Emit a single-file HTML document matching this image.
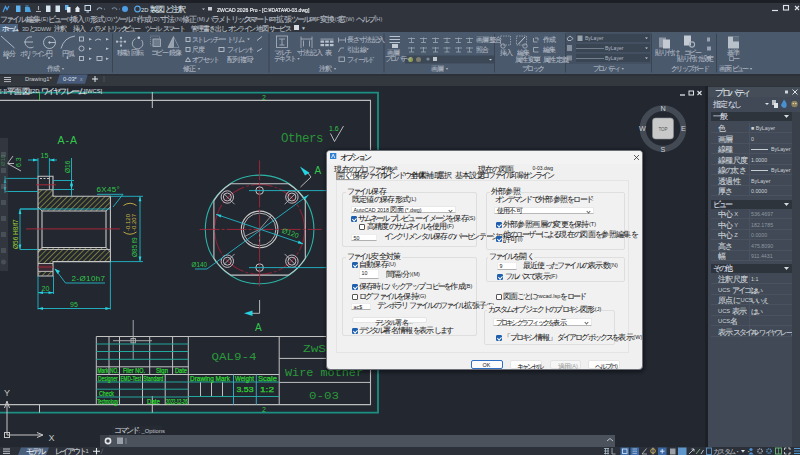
<!DOCTYPE html>
<html><head><meta charset="utf-8">
<style>
*{margin:0;padding:0;box-sizing:border-box}
html,body{width:800px;height:455px;overflow:hidden;background:#222730;font-family:"Liberation Sans",sans-serif;color:#d0d4da}
.a{position:absolute;white-space:nowrap}
.j,.k{font-size:1.35em;-webkit-text-stroke:0.1px currentColor;letter-spacing:-0.08em;position:relative;top:.12em}
.k{letter-spacing:-0.243em}
#top{left:0;top:0;width:800px;height:3px;background:#1c1f25}
#title{left:0;top:3px;width:800px;height:28.5px;background:#30353d}
#ribbon{left:0;top:31.5px;width:800px;height:42.7px;background:#4a596c}
#gap{left:0;top:74.2px;width:800px;height:2px;background:#2c3038}
#doctabs{left:0;top:76.2px;width:800px;height:9.8px;background:#33383f}
#vp{left:0;top:86px;width:705px;height:361px;background:#222730;overflow:hidden}
#vsep{left:705px;top:86px;width:3px;height:361px;background:#1d2026}
#props{left:708px;top:86px;width:92px;height:361px;background:#404955;overflow:hidden}
#status{left:0;top:447px;width:800px;height:8px;background:#2c3139}
.m{font-size:5.6px;line-height:8px;color:#b4bac2;top:15px}
.rt{font-size:5.4px;line-height:7px;color:#bcc2ca;top:24.5px}
.ic{position:absolute}
.rl{font-size:5.2px;line-height:6px;color:#aeb6c1}
.sep{position:absolute;top:33px;width:1px;height:39px;background:#3a4554}
</style><style>
.dt{font-size:5.6px;line-height:7px;color:#1e1e1e;margin-top:-1px}
.gl{font-size:5.6px;line-height:7px;color:#1e1e1e;background:#f1f1f1;padding:0 1px;margin-top:-1px}
.gb{border:1px solid #dedede;border-radius:2px}
.dd{height:7.5px;background:#fff;border:1px solid #e8e8e8;border-bottom-color:#b8b8b8;border-radius:1px}
.dd>span{position:absolute;left:2px;top:0;font-size:5.3px;line-height:6px;color:#222}
.dd:after{content:"";position:absolute;right:3px;top:2px;width:2px;height:2px;border-right:0.7px solid #666;border-bottom:0.7px solid #666;transform:rotate(45deg)}
.inp{height:7.5px;background:#fff;border:1px solid #ececec;border-bottom-color:#b0b0b0}
.inp>span{position:absolute;left:2px;top:0;font-size:5.3px;line-height:6px;color:#222}
.cb{width:6px;height:6px;border:0.8px solid #555;border-radius:1px;background:#fff}
.cb.on{background:#1f5fae;border-color:#1f5fae}
.cb.on:after{content:"";position:absolute;left:1.5px;top:0.3px;width:1.5px;height:3px;border-right:1px solid #fff;border-bottom:1px solid #fff;transform:rotate(45deg);box-sizing:content-box}
.btn{background:#fdfdfd;border:1px solid #e4e4e4;border-radius:2px}
.btn>span{position:absolute;top:0.5px;font-size:5.5px;line-height:7px;color:#1e1e1e}
#dlg .j,#dlg .k{-webkit-text-stroke:0.05px currentColor}
</style>
</head><body>
<div id="top" class="a"></div>
<div id="title" class="a"></div>
<div id="ribbon" class="a"></div>
<div id="gap" class="a"></div>
<div id="doctabs" class="a"></div>
<!-- quick access icons -->
<svg class="a" style="left:0;top:3px" width="320" height="11" viewBox="0 3 320 11">
<path d="M3,12L5.5,6.5L7,9.5L9,6" stroke="#4a9be0" stroke-width="1.3" fill="none"/>
<rect x="16" y="5.5" width="4.5" height="6.5" fill="#5fb3ee"/>
<path d="M25,7H29.5L31,12H25Z" fill="#4aa3df"/><path d="M25.5,6h3" stroke="#4aa3df"/>
<path d="M36,11.5H41M38.5,6V10" stroke="#a8adb5" stroke-width="1.1"/>
<rect x="46" y="5.5" width="4.5" height="6.5" fill="#d8e6f2"/>
<rect x="55.5" y="5.5" width="4.5" height="6.5" fill="#d8e6f2"/>
<rect x="65" y="5" width="3.5" height="5" fill="#5fb3ee"/><rect x="67" y="7" width="3.5" height="5.5" fill="#e0ecf5"/>
<path d="M75,9L77.5,6L80,9M75.5,9H79.5V12H75.5Z" fill="#e2e8ee"/>
<rect x="85" y="5.5" width="5.5" height="5" fill="none" stroke="#c7dcee" stroke-width="1"/><path d="M86.5,12H89" stroke="#c7dcee"/>
<path d="M97,10Q99,6 102,9" stroke="#8fa0b5" stroke-width="1.1" fill="none"/><circle cx="104.5" cy="9" r="0.6" fill="#8fa0b5"/>
<path d="M117,10Q115,6 112,9" stroke="#76839a" stroke-width="1.1" fill="none"/><circle cx="119.5" cy="9" r="0.6" fill="#76839a"/>
<circle cx="125" cy="9" r="3" fill="#4d9ee6"/>
<circle cx="137.5" cy="9" r="2.8" fill="none" stroke="#5aa7e8" stroke-width="1.2"/>
<path d="M202,8.5H205L203.5,10Z" fill="#c8ccd2"/>
<rect x="208" y="7" width="4" height="3.5" fill="#c8ccd2"/>
</svg>
<div class="a" style="left:141px;top:4.5px;font-size:5.8px;line-height:9px;color:#dfe3e8">2D <span class="j">製図</span><span class="k">と</span><span class="j">注釈</span></div>
<div class="a" style="left:217px;top:4.5px;font-size:6.2px;line-height:9px;color:#e8ebee;transform:scaleX(.82);-webkit-text-stroke:0.2px #e8ebee;transform-origin:0 0">ZWCAD 2026 Pro - [C:¥DATA¥0-03.dwg]</div>
<svg class="a" style="left:765px;top:3px" width="35" height="11"><path d="M7,7.5H13" stroke="#dfe3e8" stroke-width="1.2"/><rect x="18.5" y="2.5" width="5" height="4.5" fill="none" stroke="#dfe3e8" stroke-width="1.1"/><path d="M30,3L34,7M34,3L30,7" stroke="#dfe3e8" stroke-width="1.1"/></svg>
<!-- menu -->
<div class="a m" style="left:0"><span class="k">ファイル</span>(F)</div><div class="a m" style="left:26px"><span class="j">編集</span>(E)</div><div class="a m" style="left:48px"><span class="k">ビュー</span>(V)</div><div class="a m" style="left:70px"><span class="j">挿入</span>(I)</div><div class="a m" style="left:90px"><span class="j">形式</span>(O)</div><div class="a m" style="left:113px"><span class="k">ツール</span>(T)</div><div class="a m" style="left:137px"><span class="j">作成</span>(D)</div><div class="a m" style="left:160px"><span class="j">寸法</span>(N)</div><div class="a m" style="left:182px"><span class="j">修正</span>(M)</div><div class="a m" style="left:206px"><span class="k">パラメトリック</span>(P)</div><div class="a m" style="left:244px"><span class="k">スマート</span>(S)</div><div class="a m" style="left:269px">ET<span class="j">拡張</span><span class="k">ツール</span>(X)</div><div class="a m" style="left:309px">SXF<span class="j">変換</span>(S)</div><div class="a m" style="left:338px"><span class="j">窓</span>(W)</div><div class="a m" style="left:356px"><span class="k">ヘルプ</span>(H)</div>
<!-- ribbon tabs -->
<div class="a" style="left:0;top:23.5px;width:17.5px;height:8px;background:#4d6481"></div>
<div class="a rt" style="left:2px;color:#e8eef5"><span class="k">ホーム</span></div><div class="a rt" style="left:22px">3D<span class="k">と</span>3DWW</div><div class="a rt" style="left:54px"><span class="j">注釈</span></div><div class="a rt" style="left:73px"><span class="j">挿入</span></div><div class="a rt" style="left:90px"><span class="k">パラメトリック</span></div><div class="a rt" style="left:124px"><span class="k">ビュー</span></div><div class="a rt" style="left:145px"><span class="k">ツール</span></div><div class="a rt" style="left:163px"><span class="k">スマート</span></div><div class="a rt" style="left:191px"><span class="j">管理</span></div><div class="a rt" style="left:203px"><span class="j">書</span><span class="k">き</span><span class="j">出</span><span class="k">し</span></div><div class="a rt" style="left:228px"><span class="k">オンライン</span></div><div class="a rt" style="left:256px"><span class="j">地図</span><span class="k">サービス</span></div>
<div class="a" style="left:294px;top:25px;width:5px;height:5px;background:#d8dce2"></div><div class="a rt" style="left:301px;font-size:5px">▼</div>
<svg class="a" style="left:0;top:31.5px" width="800" height="42" viewBox="0 31.5 800 42">
<g fill="none" stroke="#b9c1cc" stroke-width="0.9">
<path d="M1,35.5L14.5,47.5"/>
<path d="M32,36.5A5.5,5.5 0 1 0 33.5,46.5"/><path d="M24,41.5H33"/>
<circle cx="49.5" cy="42" r="6"/><path d="M49.5,42H55.5"/><circle cx="49.5" cy="42" r="0.8" fill="#b9c1cc"/>
<path d="M61,48Q64,37 75,35.5"/>
<rect x="79.5" y="36.5" width="4" height="4"/><path d="M95,40Q98,37 101,39.5"/>
<circle cx="81.5" cy="48" r="2.5"/>
<rect x="79.5" y="56" width="4" height="4"/><rect x="97" y="56" width="5" height="4"/>
<path d="M121,37V45.5M116.5,41.2H125.5" stroke="#8f9aa8" stroke-width="0.7"/><g fill="#b9c1cc" stroke="none"><circle cx="121" cy="37.3" r="1.1"/><circle cx="121" cy="45.2" r="1.1"/><circle cx="117" cy="41.2" r="1.1"/><circle cx="125" cy="41.2" r="1.1"/><circle cx="121" cy="41.2" r="0.8"/></g>
<path d="M135.5,38.2A5.3,5.3 0 1 0 141.5,39.5" stroke="#aeb6c1"/><circle cx="138.8" cy="37.3" r="1.3" fill="#d0d6de" stroke="none"/>
<rect x="150.5" y="35.5" width="9" height="9" stroke="#8f9aa8" stroke-width="0.7" stroke-dasharray="1.2 0.8"/><rect x="153" y="38.5" width="7.5" height="7.5" fill="#6e7b8b" stroke="#aeb6c1" stroke-width="0.8"/>
<path d="M173.5,36L168,47H173.5Z" fill="#98a3b0" stroke="#aeb6c1" stroke-width="0.7"/><path d="M173.5,36L179,47H173.5" stroke="#8f9aa8" stroke-width="0.7"/>
<rect x="186" y="37" width="4" height="4"/><rect x="186" y="47" width="4" height="4"/><path d="M185.5,61L188,57L190.5,61Z"/>
<path d="M219,38.5H226"/><rect x="219" y="47" width="5" height="4"/>
<path d="M257,40L262,36M257,51L262,48"/>
<rect x="276.5" y="35.5" width="11" height="11.5" stroke="#aeb6c1" stroke-width="0.8"/><path d="M279,38.5H285M282,38.5V44.5M279.5,44.5H284.5" stroke="#aeb6c1" stroke-width="0.8"/>
<path d="M301,36V47.5M312,36V47.5M301,38.5H312M303.5,40V46M309.5,40V46" stroke="#aeb6c1" stroke-width="0.8"/>
<path d="M338.5,37V42M345.5,37V42M338.5,39.5H345.5M338.5,51.5L340.5,47.5H344" stroke="#aeb6c1" stroke-width="0.8"/>
<rect x="339" y="56.5" width="5.5" height="4.5" stroke="#aeb6c1" stroke-width="0.8"/>
<path d="M389.5,36H400M389.5,39H400M389.5,42H400" stroke="#b9c1cc" stroke-width="1"/><rect x="392" y="43.5" width="6" height="4" fill="#c3cad2" stroke="none"/>
<rect x="500.5" y="35.5" width="10" height="9" stroke="#9ea8b5" stroke-width="0.8" stroke-dasharray="1.5 1"/><circle cx="503" cy="45.5" r="2.2" stroke="#aeb6c1" stroke-width="0.8"/>
<path d="M518,44L525,36.5" stroke="#c0c7d0" stroke-width="1"/><rect x="516.5" y="35.5" width="10" height="9" stroke="#9ea8b5" stroke-width="0.8" stroke-dasharray="1.5 1"/><circle cx="525" cy="45.5" r="2.2" stroke="#aeb6c1" stroke-width="0.8"/>
<path d="M533.5,37.5V41.5H537.5M535,37.5H538V40" stroke="#aeb6c1" stroke-width="0.8"/><path d="M533.5,47V51.5H538.5M533.5,47H538.5" stroke="#aeb6c1" stroke-width="0.8"/><path d="M534,57H540M534,59.5H540" stroke="#aeb6c1" stroke-width="0.8"/>


</g>
<g fill="#b9c2cd">
<rect x="320.5" y="38" width="13" height="1.2" fill="#8d98a6"/><rect x="320.5" y="40" width="3.6" height="2.2"/><rect x="325.2" y="40" width="3.6" height="2.2"/><rect x="329.9" y="40" width="3.6" height="2.2"/><rect x="320.5" y="43.5" width="3.6" height="2.2"/><rect x="325.2" y="43.5" width="3.6" height="2.2"/><rect x="329.9" y="43.5" width="3.6" height="2.2"/>
<g fill="none" stroke="#9ea8b5" stroke-width="0.8"><path d="M408,38H415M411.5,37V42M409,42H414"/><path d="M420,38H427M423.5,37V42M421,42H426"/><path d="M432,38H439M435.5,37V42M433,42H438"/><path d="M443.5,38H450.5M447.0,37V42M444.5,42H449.5"/><path d="M455,38H462M458.5,37V42M456,42H461"/><path d="M466,38H473M469.5,37V42M467,42H472"/><path d="M408,47.5H415M411.5,46.5V51.5M409,51.5H414"/><path d="M420,47.5H427M423.5,46.5V51.5M421,51.5H426"/><path d="M432,47.5H439M435.5,46.5V51.5M433,51.5H438"/><path d="M443.5,47.5H450.5M447.0,46.5V51.5M444.5,51.5H449.5"/><path d="M455,47.5H462M458.5,46.5V51.5M456,51.5H461"/><path d="M466,47.5H473M469.5,46.5V51.5M467,51.5H472"/></g>

<rect x="659" y="37" width="7" height="10" fill="#8e98a4"/><rect x="663" y="39" width="7" height="9" fill="#c3cad2"/><rect x="684" y="35" width="7" height="10" fill="#c3cad2"/><circle cx="692" cy="44" r="2.6" fill="none" stroke="#aab2bc" stroke-width="1.1"/>
<rect x="707" y="37" width="3" height="4" opacity=".7"/><rect x="707" y="46" width="4" height="4" opacity=".7"/><rect x="707" y="56" width="4" height="3" opacity=".7"/>
<rect x="728" y="36" width="11" height="12" fill="#b8c0c9"/><rect x="733" y="36" width="6" height="5" fill="#5d6a7a"/>
<circle cx="7.5" cy="57.5" r="0.9"/><circle cx="28.5" cy="57.5" r="0.9"/><circle cx="49" cy="57.5" r="0.9"/><circle cx="67.5" cy="57.5" r="0.9"/>
<path d="M89,37.5L92,38.8L89,40Z"/><path d="M106,37.5L109,38.8L106,40Z"/><path d="M89,47L92,48.3L89,49.5Z"/><path d="M106,47L109,48.3L106,49.5Z"/><path d="M89,57L92,58.3L89,59.5Z"/><path d="M106,57L109,58.3L106,59.5Z"/>
<path d="M247,38L250,38L248.5,39.5Z"/><path d="M249,48L252,48L250.5,49.5Z"/><path d="M251,58L254,58L252.5,59.5Z"/>
<path d="M378,38L381,38L379.5,39.5Z"/><path d="M366,48L369,48L367.5,49.5Z"/>
<path d="M490,57L493,57L491.5,58.5Z"/>

</g>
<rect x="405" y="55" width="89" height="8" fill="#3d4857"/><path d="M489,58.5H492L490.5,60Z" fill="#d0d6de"/>
<circle cx="410.5" cy="59" r="2.5" fill="#8c9c4a"/><circle cx="418.5" cy="59" r="2.5" fill="#7f7d6c"/><circle cx="428" cy="58.5" r="1.6" fill="#7b8898"/><rect x="433" y="56.5" width="4" height="4" fill="#c0c6ce"/>

<g fill="#3a4554"><rect x="112" y="33" width="1" height="39"/><rect x="268.5" y="33" width="1" height="39"/><rect x="383.5" y="33" width="1" height="39"/><rect x="494" y="33" width="1" height="39"/><rect x="565" y="33" width="1" height="39"/><rect x="651" y="33" width="1" height="39"/><rect x="716" y="33" width="1" height="39"/></g>
<rect x="566" y="32" width="85" height="31.5" fill="#425061"/><rect x="576" y="33.5" width="74" height="8" fill="#3a4554"/><rect x="576" y="43.5" width="74" height="8" fill="#3a4554"/><rect x="576" y="53.5" width="74" height="8" fill="#3a4554"/><path d="M576,48H604M576,58H604" stroke="#8d97a3" stroke-width="0.7"/><rect x="577.5" y="35" width="5" height="5.5" fill="#9aa2ac"/><path d="M567,38L570,35.5L573,38L571,40H568Z" fill="none" stroke="#c0c7d0" stroke-width="0.8"/><g fill="#c9d0d8"><rect x="567" y="45" width="5" height="1"/><rect x="567" y="47" width="5" height="1"/><rect x="567" y="49" width="5" height="1"/></g><rect x="567" y="55" width="5" height="5" fill="#7f8995"/><g fill="#c9d0d8"><path d="M645,37H648L646.5,38.5Z"/><path d="M645,47H648L646.5,48.5Z"/><path d="M645,57H648L646.5,58.5Z"/></g>
</svg>
<div class="a rl" style="left:3px;top:50px"><span class="j">線分</span></div><div class="a rl" style="left:20px;top:50px"><span class="k">ポリライン</span></div><div class="a rl" style="left:46px;top:50px"><span class="j">円</span></div><div class="a rl" style="left:62px;top:50px"><span class="j">円弧</span></div>
<div class="a rl" style="left:47px;top:65.5px"><span class="j">作成</span> <span style="font-size:3.5px;vertical-align:1px">▼</span></div>
<div class="a rl" style="left:117px;top:49px"><span class="j">移動</span></div><div class="a rl" style="left:131px;top:49px"><span class="j">回転</span></div><div class="a rl" style="left:151px;top:49px"><span class="k">コピー</span></div><div class="a rl" style="left:169px;top:49px"><span class="j">鏡像</span></div>
<div class="a rl" style="left:192px;top:36px"><span class="k">ストレッチ</span></div><div class="a rl" style="left:192px;top:46px"><span class="j">尺度</span></div><div class="a rl" style="left:192px;top:56px"><span class="k">オフセット</span></div>
<div class="a rl" style="left:227px;top:36px"><span class="k">トリム</span></div><div class="a rl" style="left:227px;top:46px"><span class="k">フィレット</span></div><div class="a rl" style="left:227px;top:56px"><span class="j">配列複写</span></div>
<div class="a rl" style="left:183px;top:65.5px"><span class="j">修正</span> <span style="font-size:3.5px;vertical-align:1px">▼</span></div>
<div class="a rl" style="left:274px;top:49px"><span class="k">マルチ</span></div><div class="a rl" style="left:274px;top:55.5px"><span class="k">テキスト</span> <span style="font-size:3.5px;vertical-align:1px">▼</span></div><div class="a rl" style="left:297px;top:49px"><span class="j">寸法記入</span></div><div class="a rl" style="left:325px;top:49px"><span class="j">表</span></div>
<div class="a rl" style="left:347px;top:36px"><span class="j">長</span><span class="k">さ</span><span class="j">寸法記入</span></div><div class="a rl" style="left:347px;top:46px"><span class="j">引出線</span></div><div class="a rl" style="left:347px;top:56px"><span class="k">フィールド</span></div>
<div class="a rl" style="left:319px;top:65.5px"><span class="j">注釈</span> <span style="font-size:3.5px;vertical-align:1px">▼</span></div>
<div class="a rl" style="left:387px;top:49px"><span class="j">画層</span></div><div class="a rl" style="left:385px;top:55.5px"><span class="k">プロパティ</span></div>
<div class="a rl" style="left:476px;top:36px"><span class="j">画層整合</span></div><div class="a rl" style="left:476px;top:46px"><span class="j">照合</span></div>
<div class="a rl" style="left:431px;top:65.5px"><span class="j">画層</span> <span style="font-size:3.5px;vertical-align:1px">▼</span></div>
<div class="a rl" style="left:500px;top:49px"><span class="j">挿入</span></div><div class="a rl" style="left:517px;top:49px"><span class="j">編集</span></div><div class="a rl" style="left:515px;top:56px"><span class="j">属性変更</span></div>
<div class="a rl" style="left:543px;top:36px"><span class="j">作成</span></div><div class="a rl" style="left:543px;top:46px"><span class="j">編集</span></div><div class="a rl" style="left:543px;top:56px"><span class="j">属性定義</span></div>
<div class="a rl" style="left:522px;top:65.5px"><span class="k">ブロック</span></div>
<div class="a rl" style="left:585px;top:34.5px;font-size:5px">ByLayer</div><div class="a rl" style="left:605px;top:44.5px;font-size:5px">ByLayer</div><div class="a rl" style="left:605px;top:54.5px;font-size:5px">ByLayer</div>
<div class="a rl" style="left:593px;top:65.5px"><span class="k">プロパティ</span> <span style="font-size:3.5px;vertical-align:1px">▼</span></div>
<div class="a rl" style="left:655px;top:49px"><span class="j">貼</span><span class="k">り</span><span class="j">付</span><span class="k">け</span></div><div class="a rl" style="left:684px;top:49px"><span class="k">コピー</span></div><div class="a rl" style="left:677px;top:55.5px"><span class="j">貼</span><span class="k">り</span><span class="j">付</span><span class="k">け</span><span class="j">設定</span></div>
<div class="a rl" style="left:671px;top:65.5px"><span class="k">クリップボード</span></div>
<div class="a rl" style="left:727px;top:49px"><span class="j">基準</span></div><div class="a rl" style="left:728px;top:55.5px"><span class="k">ロー</span></div>
<div class="a rl" style="left:719px;top:65.5px"><span class="j">画面</span><span class="k">ビュー</span> <span style="font-size:3.5px;vertical-align:1px">▼</span></div>
<!-- doc tabs -->
<svg class="a" style="left:0;top:74px" width="120" height="12"><path d="M4,3.5H11M4,5.5H11M4,7.6H11" stroke="#d5d9de" stroke-width="0.8"/><path d="M59.7,0.6H87.7L85,9.8H56.6Z" fill="#475a7a"/><path d="M92,5H98M95,2V8" stroke="#e8ecf0" stroke-width="1"/><path d="M104,2V8" stroke="#5a616b" stroke-width="0.6"/></svg>
<div class="a" style="left:25px;top:75.5px;font-size:5.8px;line-height:7px;color:#c8ccd2">Drawing1*</div>
<div class="a" style="left:63px;top:75.5px;font-size:5.8px;line-height:7px;color:#dfe4ea">0-03*</div><div class="a" style="left:80px;top:75.5px;font-size:5px;line-height:7px;color:#aab3be">x</div>
<div id="vp" class="a">
<svg class="a" style="left:0;top:0" width="705" height="361" viewBox="0 86 705 361">
<defs>
<pattern id="hatch" patternUnits="userSpaceOnUse" width="3.8" height="3.8" patternTransform="rotate(45)">
<line x1="0" y1="0" x2="0" y2="3.8" stroke="#cbc843" stroke-width="1"/>
</pattern>
<marker id="ar" viewBox="0 0 10 6" refX="10" refY="3" markerWidth="5" markerHeight="3" orient="auto-start-reverse" markerUnits="userSpaceOnUse"><path d="M0,0L10,3L0,6z" fill="#27d3e0"/></marker>
</defs>
<g fill="none" stroke-linecap="butt">
<!-- frame -->
<path d="M0,92.7H378V412.6H0" stroke="#1b9083" stroke-width="1.8"/>
<path d="M0,100.4H370.5V404.6H0" stroke="#bdbdbd" stroke-width="1.1"/>
<path d="M39.5,92V100.4M152.3,92V108M39.5,404.6V412.6M152.3,396V412.6" stroke="#c8c8c8" stroke-width="1"/>
<path d="M39.5,92.5V100" stroke="#3ab54a" stroke-width="1"/>
</g>
<g fill="#33c64a" font-family="Liberation Sans" font-size="8">
<text x="262" y="99.5" font-size="7">2</text>
<text x="262" y="411.5" font-size="7">2</text>
</g>
<!-- ===== section view ===== -->
<g fill="none">
<!-- hatch areas -->
<path d="M38,190H53V196.3H110.4V207L106,211H42L38,207Z" fill="url(#hatch)"/>
<path d="M38,248H106L110.4,252V261.6H53V263.5H38Z" fill="url(#hatch)"/>
<rect x="38" y="271.4" width="15" height="4.5" fill="url(#hatch)"/>
<rect x="38" y="263.5" width="15" height="7.9" fill="#3a2a33"/>
<!-- outlines -->
<path d="M38,176.3H53V196.3H110.4V261.6H53V276H38Z" stroke="#c6c6c6" stroke-width="1.1"/>
<path d="M42,211H106V247.5H42Z" stroke="#c6c6c6" stroke-width="1.1"/>
<path d="M38,207L42,211M110.4,207L106,211M38,252L42,247.5M110.4,252L106,247.5M38,249.5H110.4" stroke="#c6c6c6" stroke-width="0.9"/>
<path d="M38,189.7H53M49.4,176.3V189.7M38,263.5H53M38,271.4H53" stroke="#c6c6c6" stroke-width="0.9"/>
<path d="M40,178.5H49" stroke="#c6c6c6" stroke-width="1" stroke-dasharray="2 1.5"/>
<!-- centerlines -->
<path d="M26,228.9H120M36,184.8H56M38,267H53" stroke="#a8283a" stroke-width="1"/><path d="M20,209H110.4" stroke="#22b9c8" stroke-width="0.9"/>
<!-- dims cyan -->
<g stroke="#22b9c8" stroke-width="0.9">
<path d="M5,178.4H38M5,191.5H38M5,176V193"/>
<path d="M53,180.5H74M53,189.5H74M71.5,158V196"/>
<path d="M38,158V176M49.4,158V176M28,160H38M49.4,160H57"/>
<path d="M20,209H38M20,249.5H38M20,209V249.5"/>
<path d="M110.4,196.3H143M110.4,261.6H143M140,196.3V261.6"/>
<path d="M53.5,276V294M38,276V309.5M110.4,262V309.5M38,292.7H53.5M38,308.5H110.4"/>
<path d="M97,194.3H123L113,207"/>
<path d="M55,269L65.5,283H105"/>
</g>
<g fill="#27d3e0">
<path d="M33,158.6L38,160L33,161.4Z"/><path d="M54.4,158.6L49.4,160L54.4,161.4Z"/>
<path d="M70.1,185.5L71.5,180.5L72.9,185.5Z"/><path d="M70.1,184.5L71.5,189.5L72.9,184.5Z"/>
<path d="M18.6,214L20,209L21.4,214Z"/><path d="M18.6,244.5L20,249.5L21.4,244.5Z"/>
<path d="M138.6,201.3L140,196.3L141.4,201.3Z"/><path d="M138.6,256.6L140,261.6L141.4,256.6Z"/>
<path d="M43,291.3L38,292.7L43,294.1Z"/><path d="M48.5,291.3L53.5,292.7L48.5,294.1Z"/>
<path d="M43,307.1L38,308.5L43,309.9Z"/><path d="M105.4,307.1L110.4,308.5L105.4,309.9Z"/>
<path d="M3.6,183L5,178.4L6.4,183Z"/><path d="M3.6,187L5,191.5L6.4,187Z"/>
<path d="M54.5,268.5L60,271L57.5,274Z"/>
</g>
<!-- roughness symbol -->
<path d="M13,156L7.5,163.5L21,171M7.5,163.5H14" stroke="#c6c6c6" stroke-width="0.9"/>
</g>
<g fill="#33c64a" font-family="Liberation Sans">
<text x="57.5" y="144.3" font-size="10.5" letter-spacing="1">A-A</text>
<text x="40.5" y="158.3" font-size="7">15</text>
<text transform="translate(69.5,173) rotate(-90)" font-size="6.5">Ø16</text>
<text transform="translate(20.5,167) rotate(-90)" font-size="7">6.3</text><text transform="translate(5,166) rotate(-90)" font-size="6" opacity=".7">Ø10</text>
<text x="96.5" y="192.3" font-size="8" letter-spacing="0.3">6X45°</text>
<text transform="translate(17.5,249) rotate(-90)" font-size="6.5" fill="#9fcf3a">Ø56 H8/f7</text>
<text transform="translate(137,257) rotate(-90)" font-size="6.5">Ø85 f9</text>
<text transform="translate(129.5,231) rotate(-90)" font-size="6" fill="#c9b846">-0.120</text>
<text transform="translate(135.5,231) rotate(-90)" font-size="6" fill="#c9b846">-0.207</text>
<text x="71.5" y="281.3" font-size="8" letter-spacing="0.4">2-Ø10h7</text>
<text x="41.5" y="291.3" font-size="7">20</text>
<text x="70" y="307.3" font-size="7">95</text>
</g>
<path d="M123.5,205.5Q130,201 136.5,205.5M123.5,232Q130,236.5 136.5,232" stroke="#c9b846" stroke-width="0.9" fill="none"/>
<!-- ===== front view ===== -->
<g fill="none" transform="translate(259.6,229.4)">
<circle r="54.3" stroke="#2db3a6" stroke-width="1.1"/>
<circle r="45" stroke="#7e2333" stroke-width="1.2" stroke-dasharray="22 2 3 2"/>
<path d="M-28.8,-45.7H28.8A54,54 0 0 1 45.7,-28.8V28.8A54,54 0 0 1 28.8,45.7H-28.8A54,54 0 0 1 -45.7,28.8V-28.8A54,54 0 0 1 -28.8,-45.7Z" stroke="#c6c6c6" stroke-width="1.1"/>
<circle r="18.3" stroke="#c6c6c6" stroke-width="1.1"/>
<circle r="16.3" stroke="#c6c6c6" stroke-width="0.9"/>
<g stroke="#c6c6c6" stroke-width="1">
<circle cx="-32.3" cy="-32.4" r="6.2" stroke="#c8bcc4"/><circle cx="-32.3" cy="-32.4" r="4" stroke="#c8bcc4"/>
<circle cx="32.3" cy="-32.4" r="6.2" stroke="#c8bcc4"/><circle cx="32.3" cy="-32.4" r="4" stroke="#c8bcc4"/>
<circle cx="-32.3" cy="31.8" r="6.2" stroke="#c8bcc4"/><circle cx="-32.3" cy="31.8" r="4" stroke="#c8bcc4"/>
<circle cx="32.3" cy="31.8" r="6.2" stroke="#c8bcc4"/><circle cx="32.3" cy="31.8" r="4" stroke="#c8bcc4"/>

<circle cx="0" cy="-38.8" r="3.8"/><circle cx="0" cy="38.2" r="3.8"/>
<path d="M-35.5,-35.6L-25,-25.1M35.5,-35.6L25,-25.1M-35.5,35L-25,24.5M35.5,35L25,24.5" stroke-width="0.8"/>
<path d="M0,0L12,-14M0,0V17M0,0L-15,7" stroke-width="0.7"/>
</g>
<path d="M-60,0H62M0,-69V57" stroke="#a8283a" stroke-width="0.9" stroke-dasharray="20 2 3 2"/>
<g stroke="#22b9c8" stroke-width="0.9">
<path d="M-43.6,-15.1L43.6,14.5"/>
<path d="M-64.6,39.6H-52.7L48.9,-34.4"/>
<path d="M-10.6,-38.8H67.4M-10.6,38.2H67.4"/>
</g>
<g fill="#27d3e0">
<path d="M-43.6,-15.1L-38.2,-14.6L-39.1,-11.9Z"/>
<path d="M43.6,14.5L38.2,14L39.1,11.2Z"/>
<path d="M48.9,-34.4L45.5,-29.8L43.8,-32.1Z"/>
</g>
<g fill="#33c64a" font-family="Liberation Sans" font-size="7">
<text transform="translate(22,3) rotate(20)">Ø120</text>
<text x="-68" y="37.5" font-size="6.3">Ø140</text>
</g>
</g>
<!-- section markers A -->
<g fill="none" stroke="#c6c6c6" stroke-width="0.9"><path d="M300.5,187L311,177L307.5,172.5"/><path d="M259.6,300V313.3H252"/></g>
<g fill="#27d3e0"><path d="M300,166.5L309.5,172.8L305,175.5Z"/><path d="M244,313.3L252.5,310.6V316Z"/></g>
<g fill="#33c64a" font-family="Liberation Sans" font-size="10"><text x="314.5" y="173.5">A</text><text x="255" y="330.5">A</text></g>
<!-- Others -->
<text x="281" y="141.5" fill="#2a9438" font-family="Liberation Mono" font-size="12.5" letter-spacing="-0.5">Others</text>
<text x="329" y="131" fill="#33c64a" font-family="Liberation Sans" font-size="7">1.6</text>
<path d="M330.5,133.5L334.5,141.5L343.5,126" fill="none" stroke="#c6c6c6" stroke-width="0.9"/>
<!-- title block -->
<g fill="none" stroke-width="1">
<g stroke="#c2c2c2">
<path d="M96.3,336.5H370.5M96.3,336.5V404.6M96.3,366.8H188.3M96.3,374.5H279.2M188.3,336.5V404.6M279.2,336.5V404.6M279.2,358.4H370.5M279.2,382.4H370.5"/>
<path d="M109,336.5V374.5M119.5,336.5V404.6M149.7,336.5V374.5M172.6,336.5V374.5M142.5,374.5V404.6M165.2,374.5V404.6M200.5,382V396.5M211.5,382V396.5M222.5,382V396.5"/>
<path d="M133.2,320V360M113,340.7H152" stroke="#b5b5b5" stroke-width="0.9"/>
<rect x="131" y="338.5" width="4.4" height="4.4" stroke="#b5b5b5" stroke-width="0.9"/>
</g>
<g stroke="#22a89c">
<path d="M96.3,344H188.3M96.3,351.5H188.3M96.3,359.3H188.3M96.3,382H188.3M96.3,389.2H188.3M96.3,397H188.3M188.3,382H279.2M188.3,396.5H279.2"/>
<path d="M233.5,374.5V404.6M256.3,374.5V404.6" stroke="#3aa6c4"/>
</g>
</g>
<g fill="#2fd035" font-family="Liberation Sans" font-size="6.3" stroke="#2fd035" stroke-width="0.25" lengthAdjust="spacingAndGlyphs">
<text x="97.5" y="373.2" textLength="11" lengthAdjust="spacingAndGlyphs">Mark</text><text x="110" y="373.2" textLength="8.5" lengthAdjust="spacingAndGlyphs">NO.</text><text x="123" y="373.2" textLength="22" lengthAdjust="spacingAndGlyphs">Filer NO.</text><text x="156" y="373.2" textLength="12" lengthAdjust="spacingAndGlyphs">Sign</text><text x="175" y="373.2" textLength="12" lengthAdjust="spacingAndGlyphs">Date</text>
<text x="98" y="380.7" textLength="19.5" lengthAdjust="spacingAndGlyphs">Designer</text><text x="120.5" y="380.7" textLength="20.5" lengthAdjust="spacingAndGlyphs">EMD-Test</text><text x="143.3" y="380.7" textLength="20" lengthAdjust="spacingAndGlyphs">Standard</text>
<text x="99" y="395.8" textLength="15" lengthAdjust="spacingAndGlyphs">Check</text><text x="97.3" y="403.6" textLength="21" lengthAdjust="spacingAndGlyphs">Technology</text><text x="147" y="403.6" textLength="13" lengthAdjust="spacingAndGlyphs">Date</text><text x="166" y="403.6" textLength="21.5" lengthAdjust="spacingAndGlyphs">2022-12-26</text>
<text x="190" y="380.7" textLength="40" lengthAdjust="spacingAndGlyphs">Drawing Mark</text><text x="235" y="380.7" textLength="19" lengthAdjust="spacingAndGlyphs">Weight</text><text x="258" y="380.7" textLength="19" lengthAdjust="spacingAndGlyphs">Scale</text>
<text x="236.5" y="391.5" textLength="17" lengthAdjust="spacingAndGlyphs">3.53</text><text x="260" y="391.5" textLength="14" lengthAdjust="spacingAndGlyphs">1:2</text>
</g>
<g fill="#2a9a3a" font-family="Liberation Mono">
<text x="211.5" y="359.5" font-size="11" textLength="45" lengthAdjust="spacingAndGlyphs">QAL9-4</text>
<text x="303" y="351.5" font-size="10" textLength="46" lengthAdjust="spacingAndGlyphs">ZwSoft</text>
<text x="285" y="375.5" font-size="10" textLength="78" lengthAdjust="spacingAndGlyphs">Wire mother</text>
<text x="309" y="398.5" font-size="11" textLength="30" lengthAdjust="spacingAndGlyphs">0-03</text>
</g>
<!-- UCS icon -->
<g fill="none" stroke="#c6c6c6" stroke-width="1"><path d="M7,435V402M7,435H42"/><rect x="4.5" y="432.5" width="5" height="5"/><path d="M4.5,408L7,401L9.5,408M37,432.5L43,435L37,437.5"/></g>
<g fill="#c6c6c6" font-family="Liberation Sans" font-size="9"><text x="4" y="395.5">Y</text><text x="48.5" y="440.5">X</text></g>
</svg>

<div class="a" style="left:0;top:1px;font-size:5.8px;line-height:7px;color:#e0e4e8">[-][<span class="j">平面図</span>][2D <span class="k">ワイヤフレーム</span>][WCS]</div>
<svg class="a" style="left:676px;top:2px" width="28" height="10"><path d="M4,7H9" stroke="#e0e4e8" stroke-width="1.3"/><rect x="13" y="3" width="4.5" height="4" fill="none" stroke="#e0e4e8" stroke-width="1"/><path d="M21.5,3L25.5,7M25.5,3L21.5,7" stroke="#e0e4e8" stroke-width="1.1"/></svg>
<!-- viewcube -->
<svg class="a" style="left:632px;top:12px" width="62" height="62" viewBox="0 0 62 62">
<circle cx="31" cy="30.5" r="20.3" fill="none" stroke="#434a54" stroke-width="6"/>
<rect x="20.5" y="20" width="21" height="21" rx="3" fill="#c9c9c9" stroke="#8d9196" stroke-width="0.6"/>
<text x="31" y="32.5" font-family="Liberation Sans" font-size="4.5" fill="#555" text-anchor="middle">TOP</text>
<g font-family="Liberation Sans" font-size="7.2" fill="#cdd2d8" text-anchor="middle"><text x="31" y="13">N</text><text x="31" y="53.5">S</text><text x="51.5" y="33.2">E</text><text x="10.5" y="33.2">W</text></g>
</svg>
<!-- left toolbar -->
<div class="a" style="left:0;top:52px;width:7.5px;height:133px;background:#4a5058;opacity:.4"></div>
<svg class="a" style="left:0;top:58px" width="8" height="127"><g fill="#8f969f" opacity=".25"><rect x="1" y="8" width="5" height="5"/><rect x="1" y="24" width="5" height="5"/><rect x="1" y="40" width="5" height="5"/><rect x="1" y="56" width="5" height="5"/><rect x="1" y="72" width="5" height="5"/><rect x="1" y="88" width="5" height="5"/><rect x="1" y="104" width="5" height="5"/><circle cx="3.5" cy="118" r="2.5"/></g></svg>
<!-- command history -->
<div class="a" style="left:112px;top:340px;width:50px;height:8px;background:#2a2e35;opacity:.6"></div>
<div class="a" style="left:114px;top:340.5px;font-size:5.8px;line-height:7px;color:#c4c8ce"><span class="k">コマンド</span>: _Options</div>
</div>
<div id="vsep" class="a"></div>
<!-- command bar -->
<div class="a" style="left:100px;top:435px;width:515px;height:11.5px;background:#4c525b"></div>
<div class="a" style="left:100px;top:435px;width:9px;height:11.5px;background:#3b4048"></div>
<svg class="a" style="left:100px;top:435px" width="520" height="12"><circle cx="8" cy="6" r="2.6" fill="none" stroke="#e3e6ea" stroke-width="1.6"/><rect x="17" y="2.5" width="6" height="6.5" fill="#9aa1aa"/><path d="M26,3V9" stroke="#c0c4ca" stroke-width="0.5"/><path d="M507,6L510,3.5L513,6" stroke="#c8ccd2" fill="none" stroke-width="0.9"/></svg>
<div id="props" class="a">
<div class="a" style="left:0;top:0;width:92px;height:1.2px;background:#2f343b"></div><div class="a" style="left:0;top:1.2px;width:92px;height:10px;background:#454d58"></div>
<div class="a" style="left:7px;top:1.5px;font-size:6.5px;line-height:8px;color:#dde1e6"><span class="k">プロパティ</span></div>
<svg class="a" style="left:76px;top:2px" width="16" height="8"><rect x="1" y="2.5" width="3" height="3" fill="#cfd4da"/><path d="M8.5,1.5L13.5,6.5M13.5,1.5L8.5,6.5" stroke="#dfe3e8" stroke-width="1"/></svg>
<div class="a" style="left:5px;top:14px;font-size:6px;line-height:8px;color:#d7dbe0"><span class="j">指定</span><span class="k">なし</span></div>
<svg class="a" style="left:52px;top:12px" width="40" height="12"><path d="M5,5H9L7,7Z" fill="#e0e4e8"/><rect x="12" y="2" width="4" height="5" fill="#b7bec6"/><rect x="14" y="5" width="4" height="5" fill="#dfe3e8"/><path d="M24,1.5Q28,6 26,9.5Q22,11 21,7Z" fill="#4a90d0"/><circle cx="34.5" cy="6" r="3.2" fill="#8a8060"/><circle cx="33.3" cy="5.5" r="0.8" fill="#e8d8a0"/><circle cx="35.8" cy="5.5" r="0.8" fill="#e8d8a0"/></svg>
<div class="a" style="left:3px;top:26.0px;width:81px;height:9px;background:#2e343c"></div>
<div class="a" style="left:5px;top:26.5px;font-size:6px;line-height:8px;color:#d7dbe0"><span class="j">一般</span></div>
<svg class="a" style="left:76px;top:29.0px" width="6" height="4"><path d="M0,0H5L2.5,3Z" fill="#d7dbe0"/></svg>
<div class="a" style="left:3px;top:36.8px;width:81px;height:10.5px;border-bottom:1px solid #4a5260"></div><div class="a" style="left:41px;top:36.8px;width:1px;height:10.5px;background:#4a5260"></div>
<div class="a" style="left:10px;top:38.2px;font-size:5.8px;line-height:8px;color:#cdd2d8"><span class="j">色</span></div>
<div class="a" style="left:43px;top:38.2px;font-size:5.3px;line-height:8px;color:#cdd2d8">■ ByLayer</div>
<div class="a" style="left:3px;top:47.2px;width:81px;height:10.5px;border-bottom:1px solid #4a5260"></div><div class="a" style="left:41px;top:47.2px;width:1px;height:10.5px;background:#4a5260"></div>
<div class="a" style="left:10px;top:48.8px;font-size:5.8px;line-height:8px;color:#cdd2d8"><span class="j">画層</span></div>
<div class="a" style="left:43px;top:48.8px;font-size:5.3px;line-height:8px;color:#cdd2d8">0</div>
<div class="a" style="left:3px;top:57.8px;width:81px;height:10.5px;border-bottom:1px solid #4a5260"></div><div class="a" style="left:41px;top:57.8px;width:1px;height:10.5px;background:#4a5260"></div>
<div class="a" style="left:10px;top:59.2px;font-size:5.8px;line-height:8px;color:#cdd2d8"><span class="j">線種</span></div>
<div class="a" style="left:43px;top:62.8px;width:17px;height:1px;background:#c8cdd3"></div>
<div class="a" style="left:63px;top:59.2px;font-size:5.3px;line-height:8px;color:#cdd2d8">ByLayer</div>
<div class="a" style="left:3px;top:68.2px;width:81px;height:10.5px;border-bottom:1px solid #4a5260"></div><div class="a" style="left:41px;top:68.2px;width:1px;height:10.5px;background:#4a5260"></div>
<div class="a" style="left:10px;top:69.8px;font-size:5.8px;line-height:8px;color:#cdd2d8"><span class="j">線種尺度</span></div>
<div class="a" style="left:43px;top:69.8px;font-size:5.3px;line-height:8px;color:#cdd2d8">1.0000</div>
<div class="a" style="left:3px;top:78.8px;width:81px;height:10.5px;border-bottom:1px solid #4a5260"></div><div class="a" style="left:41px;top:78.8px;width:1px;height:10.5px;background:#4a5260"></div>
<div class="a" style="left:10px;top:80.2px;font-size:5.8px;line-height:8px;color:#cdd2d8"><span class="j">線</span><span class="k">の</span><span class="j">太</span><span class="k">さ</span></div>
<div class="a" style="left:43px;top:83.8px;width:17px;height:1px;background:#c8cdd3"></div>
<div class="a" style="left:63px;top:80.2px;font-size:5.3px;line-height:8px;color:#cdd2d8">ByLayer</div>
<div class="a" style="left:3px;top:89.2px;width:81px;height:10.5px;border-bottom:1px solid #4a5260"></div><div class="a" style="left:41px;top:89.2px;width:1px;height:10.5px;background:#4a5260"></div>
<div class="a" style="left:10px;top:90.8px;font-size:5.8px;line-height:8px;color:#cdd2d8"><span class="j">透過性</span></div>
<div class="a" style="left:43px;top:90.8px;font-size:5.3px;line-height:8px;color:#cdd2d8">ByLayer</div>
<div class="a" style="left:3px;top:99.8px;width:81px;height:10.5px;border-bottom:1px solid #4a5260"></div><div class="a" style="left:41px;top:99.8px;width:1px;height:10.5px;background:#4a5260"></div>
<div class="a" style="left:10px;top:101.2px;font-size:5.8px;line-height:8px;color:#cdd2d8"><span class="j">厚</span><span class="k">さ</span></div>
<div class="a" style="left:43px;top:101.2px;font-size:5.3px;line-height:8px;color:#cdd2d8">0.0000</div>
<div class="a" style="left:3px;top:113.5px;width:81px;height:9px;background:#2e343c"></div>
<div class="a" style="left:5px;top:114.0px;font-size:6px;line-height:8px;color:#d7dbe0"><span class="k">ビュー</span></div>
<svg class="a" style="left:76px;top:116.5px" width="6" height="4"><path d="M0,0H5L2.5,3Z" fill="#d7dbe0"/></svg>
<div class="a" style="left:3px;top:122.8px;width:81px;height:10.5px;border-bottom:1px solid #4a5260"></div><div class="a" style="left:41px;top:122.8px;width:1px;height:10.5px;background:#4a5260"></div>
<div class="a" style="left:10px;top:124.2px;font-size:5.8px;line-height:8px;color:#cdd2d8"><span class="j">中心</span> X</div>
<div class="a" style="left:43px;top:124.2px;font-size:5.3px;line-height:8px;color:#8e97a2">536.4697</div>
<div class="a" style="left:3px;top:133.2px;width:81px;height:10.5px;border-bottom:1px solid #4a5260"></div><div class="a" style="left:41px;top:133.2px;width:1px;height:10.5px;background:#4a5260"></div>
<div class="a" style="left:10px;top:134.8px;font-size:5.8px;line-height:8px;color:#cdd2d8"><span class="j">中心</span> Y</div>
<div class="a" style="left:43px;top:134.8px;font-size:5.3px;line-height:8px;color:#8e97a2">182.1785</div>
<div class="a" style="left:3px;top:143.8px;width:81px;height:10.5px;border-bottom:1px solid #4a5260"></div><div class="a" style="left:41px;top:143.8px;width:1px;height:10.5px;background:#4a5260"></div>
<div class="a" style="left:10px;top:145.2px;font-size:5.8px;line-height:8px;color:#cdd2d8"><span class="j">中心</span> Z</div>
<div class="a" style="left:43px;top:145.2px;font-size:5.3px;line-height:8px;color:#8e97a2">0.0000</div>
<div class="a" style="left:3px;top:154.2px;width:81px;height:10.5px;border-bottom:1px solid #4a5260"></div><div class="a" style="left:41px;top:154.2px;width:1px;height:10.5px;background:#4a5260"></div>
<div class="a" style="left:10px;top:155.8px;font-size:5.8px;line-height:8px;color:#cdd2d8"><span class="j">高</span><span class="k">さ</span></div>
<div class="a" style="left:43px;top:155.8px;font-size:5.3px;line-height:8px;color:#8e97a2">475.8090</div>
<div class="a" style="left:3px;top:164.8px;width:81px;height:10.5px;border-bottom:1px solid #4a5260"></div><div class="a" style="left:41px;top:164.8px;width:1px;height:10.5px;background:#4a5260"></div>
<div class="a" style="left:10px;top:166.2px;font-size:5.8px;line-height:8px;color:#cdd2d8"><span class="j">幅</span></div>
<div class="a" style="left:43px;top:166.2px;font-size:5.3px;line-height:8px;color:#8e97a2">911.4431</div>
<div class="a" style="left:3px;top:178.0px;width:81px;height:9px;background:#2e343c"></div>
<div class="a" style="left:5px;top:178.5px;font-size:6px;line-height:8px;color:#d7dbe0"><span class="k">その</span><span class="j">他</span></div>
<svg class="a" style="left:76px;top:181.0px" width="6" height="4"><path d="M0,0H5L2.5,3Z" fill="#d7dbe0"/></svg>
<div class="a" style="left:3px;top:187.8px;width:81px;height:10.5px;border-bottom:1px solid #4a5260"></div><div class="a" style="left:41px;top:187.8px;width:1px;height:10.5px;background:#4a5260"></div>
<div class="a" style="left:10px;top:189.2px;font-size:5.8px;line-height:8px;color:#cdd2d8"><span class="j">注釈尺度</span></div>
<div class="a" style="left:43px;top:189.2px;font-size:5.3px;line-height:8px;color:#cdd2d8">1:1</div>
<div class="a" style="left:3px;top:198.2px;width:81px;height:10.5px;border-bottom:1px solid #4a5260"></div><div class="a" style="left:41px;top:198.2px;width:1px;height:10.5px;background:#4a5260"></div>
<div class="a" style="left:10px;top:199.8px;font-size:5.8px;line-height:8px;color:#cdd2d8">UCS <span class="k">アイコン</span>…</div>
<div class="a" style="left:43px;top:199.8px;font-size:5.3px;line-height:8px;color:#cdd2d8"><span class="k">はい</span></div>
<div class="a" style="left:3px;top:208.8px;width:81px;height:10.5px;border-bottom:1px solid #4a5260"></div><div class="a" style="left:41px;top:208.8px;width:1px;height:10.5px;background:#4a5260"></div>
<div class="a" style="left:10px;top:210.2px;font-size:5.8px;line-height:8px;color:#cdd2d8"><span class="j">原点</span><span class="k">に</span> UCS…</div>
<div class="a" style="left:43px;top:210.2px;font-size:5.3px;line-height:8px;color:#cdd2d8"><span class="k">いいえ</span></div>
<div class="a" style="left:3px;top:219.2px;width:81px;height:10.5px;border-bottom:1px solid #4a5260"></div><div class="a" style="left:41px;top:219.2px;width:1px;height:10.5px;background:#4a5260"></div>
<div class="a" style="left:10px;top:220.8px;font-size:5.8px;line-height:8px;color:#cdd2d8">UCS <span class="j">表示</span></div>
<div class="a" style="left:43px;top:220.8px;font-size:5.3px;line-height:8px;color:#cdd2d8"><span class="k">はい</span></div>
<div class="a" style="left:3px;top:229.8px;width:81px;height:10.5px;border-bottom:1px solid #4a5260"></div><div class="a" style="left:41px;top:229.8px;width:1px;height:10.5px;background:#4a5260"></div>
<div class="a" style="left:10px;top:231.2px;font-size:5.8px;line-height:8px;color:#cdd2d8">UCS<span class="j">名</span></div>
<div class="a" style="left:43px;top:231.2px;font-size:5.3px;line-height:8px;color:#cdd2d8"></div>
<div class="a" style="left:3px;top:240.2px;width:81px;height:10.5px;border-bottom:1px solid #4a5260"></div><div class="a" style="left:41px;top:240.2px;width:1px;height:10.5px;background:#4a5260"></div>
<div class="a" style="left:10px;top:241.8px;font-size:5.8px;line-height:8px;color:#cdd2d8"><span class="j">表示</span><span class="k">スタイル</span></div>
<div class="a" style="left:43px;top:241.8px;font-size:5.3px;line-height:8px;color:#cdd2d8">2D <span class="k">ワイヤフレーム</span></div>

</div>
<div class="a" style="left:792px;top:112px;width:8px;height:335px;background:#39404a"></div>
<div class="a" style="left:325px;top:148.5px;width:320px;height:224px;background:rgba(0,0,0,.35);border-radius:6px;filter:blur(1.5px)"></div>
<div class="a" id="dlg" style="left:326.2px;top:149.6px;width:316.6px;height:220px;background:#f0f0f0;border:1px solid #6a6f78;border-radius:4px;overflow:hidden;color:#1a1a1a">
<div class="a" style="left:0;top:0;width:316px;height:13px;background:#f3f3f3"></div>
<svg class="a" style="left:3px;top:2.8px" width="8" height="7"><rect width="6.3" height="6" fill="#2f7fd4"/><path d="M1.5,5L3.2,1.2L4.8,5" stroke="#fff" stroke-width="0.8" fill="none"/></svg>
<div class="a" style="left:12.4px;top:2.5px;font-size:6px;line-height:8px;color:#000"><span class="k">オプション</span></div>
<svg class="a" style="left:306px;top:3.5px" width="8" height="7"><path d="M1,1L6,6M6,1L1,6" stroke="#333" stroke-width="0.8"/></svg>
<div class="a dt" style="left:7.2px;top:15.5px"><span class="j">現在</span><span class="k">のプロファイル</span></div><div class="a dt" style="left:54.4px;top:15.5px;font-size:5px">Default</div>
<div class="a dt" style="left:150.4px;top:15.5px"><span class="j">現在</span><span class="k">の</span><span class="j">図面</span></div><div class="a dt" style="left:205.4px;top:15.5px;font-size:5px">0-03.dwg</div>
<div class="a" style="left:8.4px;top:21.8px;width:23.5px;height:7.5px;border:1px solid #9a9a9a;background:#fff"></div>
<div class="a dt" style="left:9.4px;top:21.5px"><span class="j">開</span><span class="k">く</span>/<span class="j">保存</span></div><div class="a dt" style="left:34.4px;top:21.5px"><span class="k">ファイル</span></div><div class="a dt" style="left:52.4px;top:21.5px"><span class="k">ウインドウ</span><span class="j">全体</span></div><div class="a dt" style="left:84.4px;top:21.5px"><span class="j">作図補助</span></div><div class="a dt" style="left:109.4px;top:21.5px"><span class="j">選択</span></div><div class="a dt" style="left:127.4px;top:21.5px"><span class="j">基本設定</span></div><div class="a dt" style="left:148.4px;top:21.5px"><span class="k">プロファイル</span></div><div class="a dt" style="left:183.4px;top:21.5px"><span class="j">印刷</span></div><div class="a dt" style="left:195.4px;top:21.5px"><span class="k">オンライン</span></div>
<div class="a" style="left:8.6px;top:29.5px;width:293px;height:173px;border:1px solid #e4e4e4;background:#f1f1f1"></div>
<!-- group boxes -->
<div class="a gb" style="left:14.4px;top:41.2px;width:135px;height:55px"></div>
<div class="a gl" style="left:18.4px;top:37px"><span class="k">ファイル</span><span class="j">保存</span></div>
<div class="a dt" style="left:24.4px;top:45.5px"><span class="j">既定値</span><span class="k">の</span><span class="j">保存形式</span>(L)</div>
<div class="a dd" style="left:23.4px;top:55px;width:105.5px"><span>AutoCAD 2018 <span class="j">図面</span> (*.dwg)</span></div>
<div class="a cb on" style="left:23.4px;top:65.5px"></div><div class="a dt" style="left:30.4px;top:64.5px"><span class="k">サムネール</span> <span class="k">プレビュー</span> <span class="k">イメージを</span><span class="j">保存</span>(S)</div>
<div class="a cb" style="left:31.4px;top:73.2px"></div><div class="a dt" style="left:39.4px;top:72px"><span class="j">高精度</span><span class="k">のサムネイルを</span><span class="j">使用</span>(F)</div>
<div class="a inp" style="left:23.4px;top:83.2px;width:26px"><span>50</span></div><div class="a dt" style="left:56.4px;top:82.5px"><span class="k">インクリメンタル</span><span class="j">保存</span><span class="k">のパーセンテージ</span>(R)</div>

<div class="a gb" style="left:14.4px;top:106.2px;width:135px;height:79px"></div>
<div class="a gl" style="left:18.4px;top:102px"><span class="k">ファイル</span><span class="j">安全対策</span></div>
<div class="a cb on" style="left:24.4px;top:111px"></div><div class="a dt" style="left:31.4px;top:110px"><span class="j">自動保存</span>(U)</div>
<div class="a inp" style="left:31.4px;top:118.5px;width:20.5px;height:9.5px"><span>10</span></div><div class="a dt" style="left:58.4px;top:120.5px"><span class="j">間隔</span>(<span class="j">分</span>)(M)</div>
<div class="a cb on" style="left:24.4px;top:133.5px"></div><div class="a dt" style="left:31.4px;top:132.5px"><span class="j">保存時</span><span class="k">にバックアップ</span> <span class="k">コピーを</span><span class="j">作成</span>(B)</div>
<div class="a cb" style="left:24.4px;top:143px"></div><div class="a dt" style="left:31.4px;top:142px"><span class="k">ログ</span> <span class="k">ファイルを</span><span class="j">保持</span>(G)</div>
<div class="a inp" style="left:23.4px;top:152px;width:20px"><span>ac$</span></div><div class="a dt" style="left:49.4px;top:151.5px"><span class="k">テンポラリ</span> <span class="k">ファイルのファイル</span><span class="j">拡張子</span>(E)</div>
<div class="a btn" style="left:24.4px;top:166px;width:75px;height:6.8px"><span style="left:22px"><span class="k">デジタル</span><span class="j">署名</span>...</span></div>
<div class="a cb on" style="left:24.4px;top:177px"></div><div class="a dt" style="left:31.4px;top:176px"><span class="k">デジタル</span><span class="j">署名情報</span><span class="k">を</span><span class="j">表示</span><span class="k">します</span></div>

<div class="a gb" style="left:158.4px;top:41.2px;width:139.5px;height:58px"></div>
<div class="a gl" style="left:162.4px;top:37px"><span class="j">外部参照</span></div>
<div class="a dt" style="left:167.4px;top:45.5px"><span class="k">オンデマンドで</span><span class="j">外部参照</span><span class="k">をロード</span>:</div>
<div class="a dd" style="left:166.4px;top:56px;width:100px"><span><span class="j">使用不可</span></span></div>
<div class="a cb on" style="left:168.4px;top:71px"></div><div class="a dt" style="left:175.4px;top:70px"><span class="j">外部参照画層</span><span class="k">の</span><span class="j">変更</span><span class="k">を</span><span class="j">保持</span>(T)</div>
<div class="a cb on" style="left:168.4px;top:85px"></div><div class="a dt" style="left:175.4px;top:80.5px"><span class="j">他</span><span class="k">のユーザーによる</span><span class="j">現在</span><span class="k">の</span><span class="j">図面</span><span class="k">を</span><span class="j">参照編集</span><span class="k">を</span></div><div class="a dt" style="left:175.4px;top:85.5px"><span class="j">許可</span>(I)</div>

<div class="a gb" style="left:158.4px;top:106.2px;width:139.5px;height:25px"></div>
<div class="a gl" style="left:160.4px;top:102px"><span class="k">ファイルを</span><span class="j">開</span><span class="k">く</span></div>
<div class="a inp" style="left:169.4px;top:111px;width:20px;height:8px"><span>9</span></div><div class="a dt" style="left:195.4px;top:111.5px"><span class="j">最近使</span><span class="k">ったファイルの</span><span class="j">表示数</span>(N)</div>
<div class="a cb on" style="left:169.4px;top:123px"></div><div class="a dt" style="left:177.4px;top:122px"><span class="k">フルパスで</span><span class="j">表示</span>(F)</div>
<div class="a cb" style="left:168.4px;top:143px"></div><div class="a dt" style="left:175.4px;top:142px"><span class="j">図面</span><span class="k">ごとに</span>zwcad.lsp<span class="k">をロード</span></div>

<div class="a gb" style="left:156.4px;top:159.2px;width:131.5px;height:35px"></div>
<div class="a gl" style="left:159.4px;top:155px"><span class="k">カスタムオブジェクトのプロキシ</span><span class="j">図形</span>(J)</div>
<div class="a dd" style="left:165.4px;top:167.5px;width:99px"><span><span class="k">プロキシグラフィックを</span><span class="j">表示</span></span></div>
<div class="a cb on" style="left:168.4px;top:184px"></div><div class="a dt" style="left:175.4px;top:183px"><span class="j">「</span><span class="k">プロキシ</span><span class="j">情報」</span><span class="k">ダイアログボックスを</span><span class="j">表示</span>(W)</div>

<div class="a btn" style="left:143.4px;top:209.6px;width:32px;height:9px;border-color:#2f6fc4"><span style="left:11px">OK</span></div>
<div class="a btn" style="left:182.4px;top:209.6px;width:32px;height:9px"><span style="left:6px"><span class="k">キャンセル</span></span></div>
<div class="a btn" style="left:222.4px;top:209.6px;width:31px;height:9px;background:#f6f6f6;border-color:#e2e2e2"><span style="left:7px;color:#9a9a9a"><span class="j">適用</span>(A)</span></div>
<div class="a btn" style="left:260.4px;top:209.6px;width:32px;height:9px"><span style="left:6px"><span class="k">ヘルプ</span>(H)</span></div>
</div>
<div id="status" class="a"></div>
<svg class="a" style="left:0;top:447px" width="800" height="8">
<path d="M3,2H10M3,4.2H10M3,6.4H10" stroke="#d5d9de" stroke-width="0.9"/>
<path d="M21,0.5H49L46,8H18Z" fill="#4a5f7e"/>
<path d="M93,4.2H100M96.5,1V7.5" stroke="#e8ecf0" stroke-width="1.1"/><path d="M103,1.5L101,7" stroke="#6a717b" stroke-width="0.6"/>
<g fill="none" stroke="#a9bccd" stroke-width="0.8"><path d="M604,1.5H609M604,4H609M604,6.5H609M605.5,1V7.5M608,1V7.5"/><path d="M612,1V7H615.5" stroke="#b9c0c8"/></g>
<rect x="620.5" y="0.5" width="8.5" height="7.5" fill="#3b6aa6"/><rect x="622.5" y="2" width="4.5" height="4.5" fill="none" stroke="#dfe8f2" stroke-width="0.8"/>
<rect x="630.5" y="0.5" width="8.5" height="7.5" fill="#3b6aa6"/><path d="M632.5,2H637M632.5,4.2H637M632.5,6.4H637" stroke="#c8d6e6" stroke-width="0.7"/>
<path d="M642,7L646.5,1.5M642,7H647" stroke="#c0c6cc" stroke-width="0.8" fill="none"/>
<circle cx="653" cy="4" r="2.3" fill="none" stroke="#d6b24a" stroke-width="0.9"/><path d="M653,0.5V7.5" stroke="#e0e0e0" stroke-width="0.6"/>
<rect x="658" y="0.5" width="8.5" height="7.5" fill="#3b6aa6"/><path d="M662.2,2V6.5M660,4.2H664.5" stroke="#fff" stroke-width="0.8"/>
<rect x="670" y="1.5" width="5.5" height="6" fill="#9aa1a9"/>
<rect x="678" y="0.5" width="8.5" height="7.5" fill="#5f97cc"/>
<path d="M689,7L694,2M691.5,2H694V4.5" stroke="#d8e2ec" stroke-width="0.8" fill="none"/><path d="M696,7L700,2" stroke="#8fcf8a" stroke-width="0.8"/>
<path d="M701,7L703.5,3" stroke="#d8e2ec" stroke-width="0.8"/>
<rect x="706.5" y="1" width="5" height="6.5" fill="none" stroke="#5f97cc" stroke-width="0.9"/>
<path d="M741,3H745L743,5.5Z" fill="#e6e9ec"/>
<circle cx="751" cy="2.5" r="1.6" fill="#4f92d8"/><path d="M748.5,7.5Q751,3 753.5,7.5" fill="#4f92d8"/>
<circle cx="760" cy="4" r="2.2" fill="none" stroke="#bfc5cc" stroke-width="1.2" stroke-dasharray="1 0.7"/>
<circle cx="769" cy="4" r="2.2" fill="none" stroke="#5aa7e8" stroke-width="1.2" stroke-dasharray="1 0.7"/>
<rect x="775.5" y="1" width="6" height="6" fill="none" stroke="#6cbf7a" stroke-width="0.9"/><path d="M778.5,1V7" stroke="#6cbf7a" stroke-width="0.7"/>
<path d="M784.5,3V1H786.5M788,1H790V3M790,5V7H788M786.5,7H784.5V5" stroke="#dfe4ea" stroke-width="0.8" fill="none"/>
<path d="M794,1.5H800M794,4H800M794,6.5H800" stroke="#5aa7e8" stroke-width="0.9"/>
</svg>
<div class="a" style="left:26px;top:447px;font-size:5.8px;line-height:8px;color:#e4e8ee"><span class="k">モデル</span></div>
<div class="a" style="left:55px;top:447px;font-size:5.8px;line-height:8px;color:#c8ccd2"><span class="k">レイアウト</span>1</div>
<div class="a" style="left:713px;top:447px;font-size:5.2px;line-height:8px;color:#aab2bb"><span class="k">カスタム・・・</span></div>
</body></html>
